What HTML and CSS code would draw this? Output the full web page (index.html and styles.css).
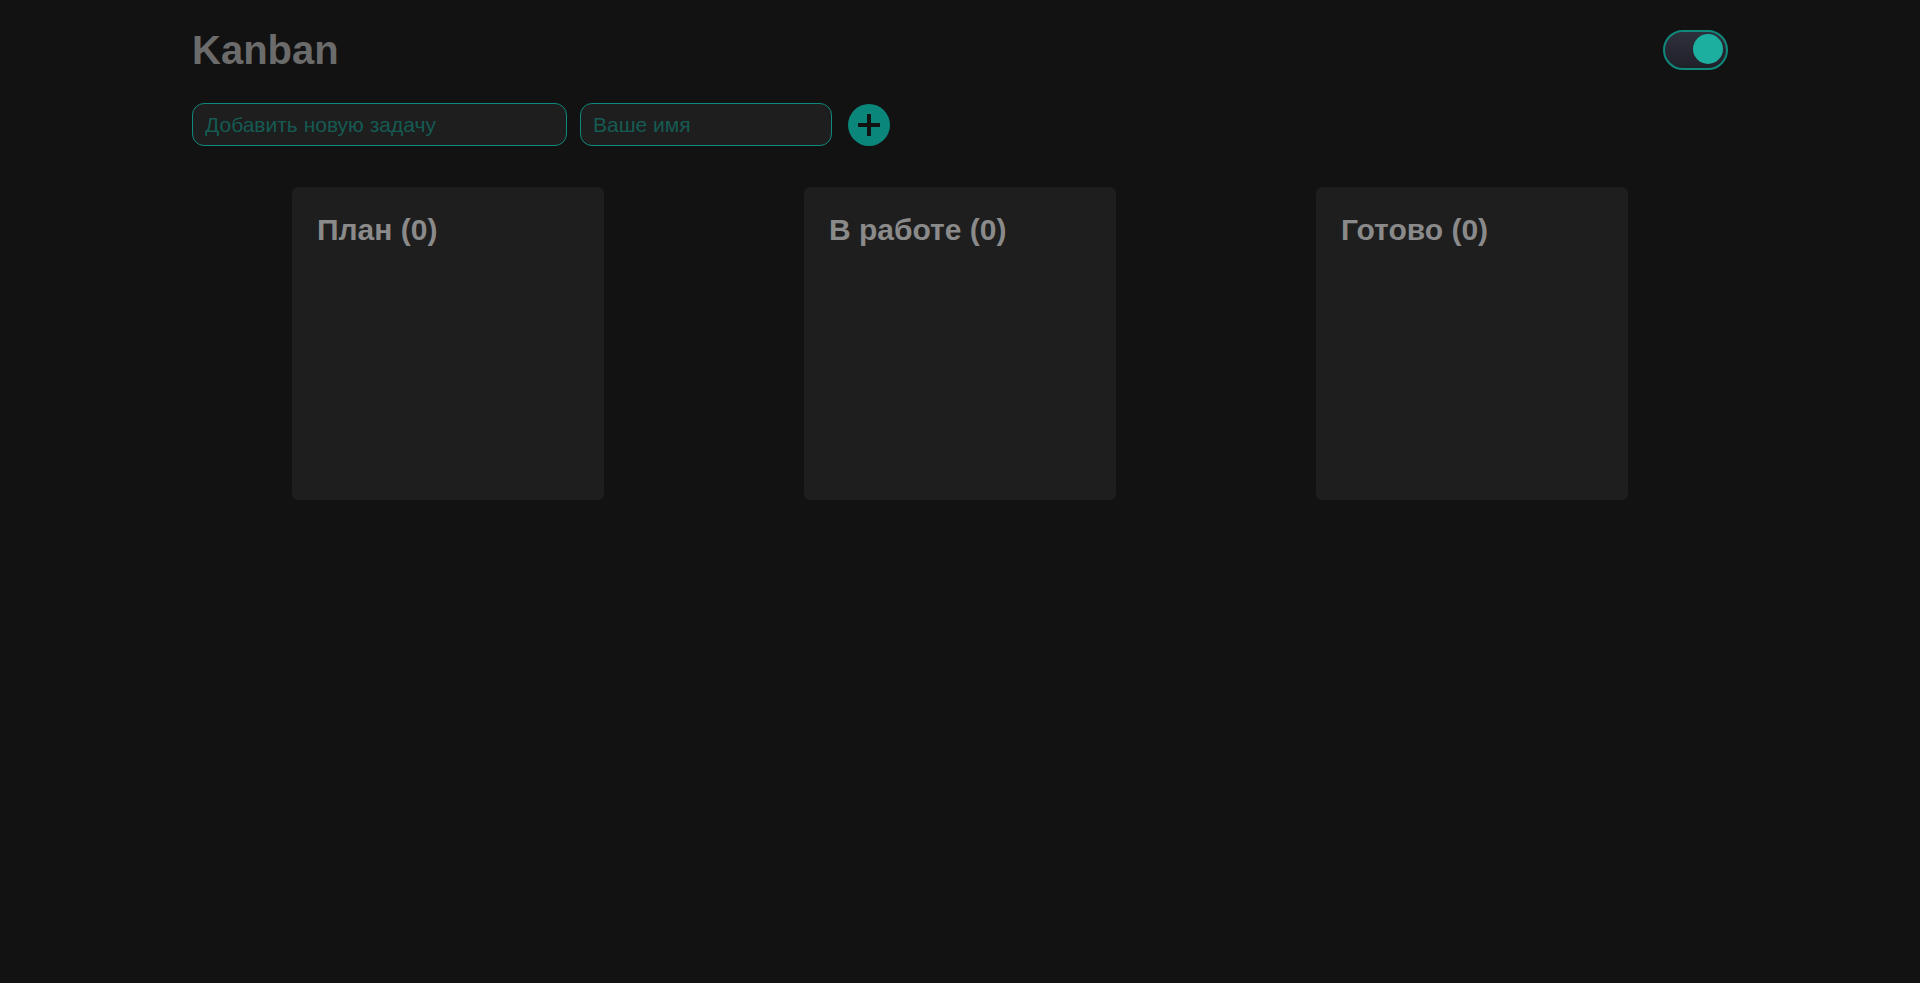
FILE: index.html
```html
<!DOCTYPE html>
<html lang="ru">
<head>
<meta charset="utf-8">
<title>Kanban</title>
<link rel="stylesheet" href="styles.css">
</head>
<body>
<div class="container">
  <header class="header">
    <h1 class="title">Kanban</h1>
    <input class="toggle" type="checkbox" role="switch" aria-label="Тёмная тема" checked>
  </header>
  <form class="form">
    <input class="field field-task" type="text" placeholder="Добавить новую задачу" aria-label="Добавить новую задачу">
    <input class="field field-name" type="text" placeholder="Ваше имя" aria-label="Ваше имя">
    <button class="add" type="button" aria-label="Добавить">
      <svg viewBox="0 0 42 42" aria-hidden="true"><path d="M19 10h4v9h9v4h-9v9h-4v-9h-9v-4h9z"/></svg>
    </button>
  </form>
  <main class="board">
    <section class="column"><h2 class="column-title">План (0)</h2></section>
    <section class="column"><h2 class="column-title">В работе (0)</h2></section>
    <section class="column"><h2 class="column-title">Готово (0)</h2></section>
  </main>
</div>
</body>
</html>
```
FILE: styles.css
```css
* {
  box-sizing: border-box;
}

body {
  margin: 0;
  min-height: 100vh;
  background: #121212;
  font-family: "Liberation Sans", Arial, sans-serif;
}

.container {
  width: 80%;
  margin: 0 auto;
  padding-top: 27px;
}

.header {
  display: flex;
  align-items: center;
  justify-content: space-between;
}

.title {
  margin: 0;
  font-size: 40px;
  line-height: 46px;
  color: #6b6b6b;
}

.toggle {
  appearance: none;
  display: flex;
  align-items: flex-start;
  justify-content: flex-end;
  width: 65px;
  height: 40px;
  margin: 0;
  padding: 2px 3px;
  border: 2px solid #0f897b;
  border-radius: 20px;
  background: linear-gradient(#2e303b, #20202a);
  cursor: pointer;
}

.toggle::before {
  content: "";
  width: 30px;
  height: 30px;
  border-radius: 50%;
  background: #1cae9f;
}

.toggle:not(:checked) {
  justify-content: flex-start;
}

.form {
  display: flex;
  align-items: flex-end;
  margin-top: 30px;
}

.field {
  height: 43px;
  padding: 0 12px;
  border: 1px solid #0f897b;
  border-radius: 12px;
  background: #1e1e1e;
  color: #0a877a;
  font-family: inherit;
  font-size: 21px;
}

.field::placeholder {
  color: #155b53;
  opacity: 1;
}

.field-task {
  width: 375px;
}

.field-name {
  width: 252px;
  margin-left: 13px;
}

.add {
  width: 42px;
  height: 42px;
  margin-left: 16px;
  padding: 0;
  border: 0;
  border-radius: 50%;
  background: #0a877a;
  cursor: pointer;
}

.add svg {
  display: block;
  fill: #121212;
}

.board {
  display: flex;
  justify-content: space-around;
  align-items: flex-start;
  margin-top: 41px;
}

.column {
  width: 312px;
  min-height: 313px;
  padding: 25px;
  border-radius: 6px;
  background: #1e1e1e;
}

.column-title {
  margin: 0;
  font-size: 30px;
  line-height: 35px;
  color: #8a8a8a;
}
```
